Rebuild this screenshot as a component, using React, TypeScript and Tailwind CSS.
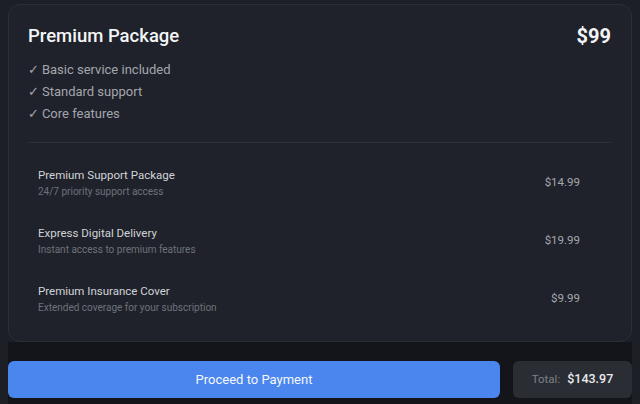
const features = ['Basic service included', 'Standard support', 'Core features']

const addons = [
  { name: 'Premium Support Package', desc: '24/7 priority support access', price: '$14.99' },
  { name: 'Express Digital Delivery', desc: 'Instant access to premium features', price: '$19.99' },
  { name: 'Premium Insurance Cover', desc: 'Extended coverage for your subscription', price: '$9.99' },
]

export default function App() {
  return (
    <div className="h-[404px] overflow-hidden bg-[#1c1f26] px-2 pt-1 font-['Roboto',sans-serif]">
      <div className="rounded-xl border border-[#2b2f37] bg-[#1f222a] pl-[19px] pr-5 pt-[17px] pb-[13px]">
        <div className="flex items-center justify-between">
          <h1 className="text-[18.5px] leading-7 font-medium text-[#f3f4f6]">Premium Package</h1>
          <span className="text-[20px] leading-7 font-bold text-[#f3f4f6]">$99</span>
        </div>
        <ul className="mt-[9px] text-[13px] leading-[22px] text-[#a3a6ad]">
          {features.map((f) => (
            <li key={f} className="flex items-center gap-[3px]">
              <span className="font-['DejaVu_Sans',sans-serif] text-[13px] leading-[22px]">✓</span>
              <span>{f}</span>
            </li>
          ))}
        </ul>
        <div className="mt-[17px] h-px bg-[#2c3038]" />
        <div className="mt-[11px] ml-[10px] mr-[31px]">
          {addons.map((a) => (
            <div key={a.name} className="flex h-[58px] items-center justify-between">
              <div>
                <div className="text-[11.5px] leading-[17px] text-[#d1d3d8]">{a.name}</div>
                <div className="text-[10px] leading-[16px] text-[#6e727a]">{a.desc}</div>
              </div>
              <span className="text-[11.5px] text-[#a5a8ae]">{a.price}</span>
            </div>
          ))}
        </div>
      </div>
      <div className="flex gap-[13px] bg-[#13151a] pt-[19px] pb-4">
        <button className="h-[37px] flex-1 rounded-md bg-[#4a86ee] text-[13px] text-[#f5f7fb]">
          Proceed to Payment
        </button>
        <div className="flex h-[37px] w-[119px] items-center justify-center gap-[7px] rounded-md bg-[#2a2d33]">
          <span className="text-[11.5px] text-[#7c8087]">Total:</span>
          <span className="text-[12.5px] font-medium text-[#e8eaed]">$143.97</span>
        </div>
      </div>
    </div>
  )
}
